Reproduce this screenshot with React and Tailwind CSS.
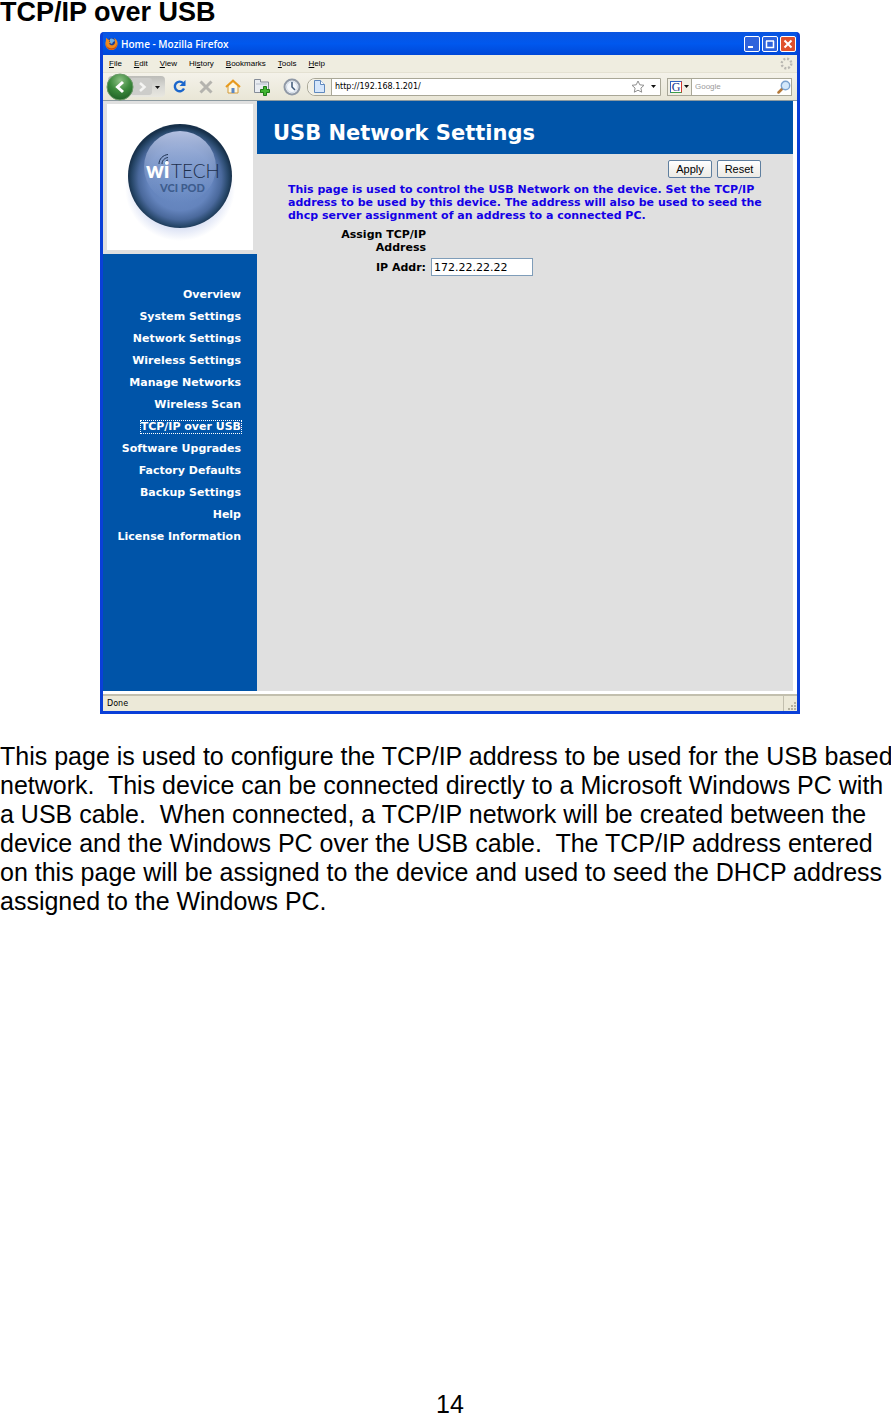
import clsx from 'clsx'

const MENUS = [
  ['', 'F', 'ile'],
  ['', 'E', 'dit'],
  ['', 'V', 'iew'],
  ['Hi', 's', 'tory'],
  ['', 'B', 'ookmarks'],
  ['', 'T', 'ools'],
  ['', 'H', 'elp'],
]

const NAV_ITEMS = [
  'Overview',
  'System Settings',
  'Network Settings',
  'Wireless Settings',
  'Manage Networks',
  'Wireless Scan',
  'TCP/IP over USB',
  'Software Upgrades',
  'Factory Defaults',
  'Backup Settings',
  'Help',
  'License Information',
]

const BODY_LINES = [
  'This page is used to configure the TCP/IP address to be used for the USB based',
  'network.  This device can be connected directly to a Microsoft Windows PC with',
  'a USB cable.  When connected, a TCP/IP network will be created between the',
  'device and the Windows PC over the USB cable.  The TCP/IP address entered',
  'on this page will be assigned to the device and used to seed the DHCP address',
  'assigned to the Windows PC.',
]

function FirefoxIcon() {
  return (
    <svg width="13" height="13" viewBox="0 0 13 13" aria-hidden="true">
      <circle cx="6.5" cy="6" r="5" fill="#1c3f94" />
      <path d="M5 2c2-1 4 0 5 2l-2 1-1 2-2-1z" fill="#6fb1e8" />
      <path
        d="M1 1c1 .3 1.5 1 2 1.6L5 3 4 4.500l2 1-2 1c1 2 4 2.500 5.500.5C10.500 5.500 10 3 9 1c3 1.500 4 4 3.500 6.500C12 11 9.500 13 6.500 13S.8 11 .4 7.500C.2 5 1.300 4 1 1z"
        fill="#f08a1c"
      />
      <path d="M1 6c0 3 2 5 5 5.300S11 10 12 7c0 3-2 5.700-5.500 5.700S1 10 1 6z" fill="#c8480c" />
    </svg>
  )
}

function BackForward() {
  return (
    <svg width="60" height="28" viewBox="0 0 60 28" aria-hidden="true">
      <defs>
        <radialGradient id="back" cx=".5" cy=".25" r=".8">
          <stop offset="0" stopColor="#8cc084" />
          <stop offset=".5" stopColor="#3c8a3c" />
          <stop offset="1" stopColor="#1d5c24" />
        </radialGradient>
        <linearGradient id="fwd" x1="0" y1="0" x2="0" y2="1">
          <stop offset="0" stopColor="#bcbcb8" />
          <stop offset=".5" stopColor="#d8d8d4" />
          <stop offset="1" stopColor="#e8e7e0" />
        </linearGradient>
      </defs>
      <rect x="2" y="3" width="57" height="21" rx="4" fill="url(#fwd)" />
      <rect x="24" y="5" width="22" height="17" rx="3" fill="#cdcdca" />
      <circle cx="14" cy="14" r="13" fill="url(#back)" stroke="#6b9a68" />
      <path d="M17 9l-5.500 5 5.500 5" fill="none" stroke="#fff" strokeWidth="3" />
      <path d="M34 10l4.500 4-4.500 4" fill="none" stroke="#f4f4f2" strokeWidth="2.500" />
      <path d="M49 13h5l-2.500 3z" fill="#111" />
    </svg>
  )
}

function ReloadIcon() {
  return (
    <svg width="15" height="15" viewBox="0 0 15 15" aria-hidden="true">
      <path d="M11 4A4.800 4.800 0 1 0 12 9.500" fill="none" stroke="#1b66cc" strokeWidth="2.400" />
      <path d="M13.500 1v6H7.500z" fill="#1b66cc" />
    </svg>
  )
}

function StopIcon() {
  return (
    <svg width="14" height="14" viewBox="0 0 14 14" aria-hidden="true">
      <path d="M1.500 1.500l11 11M12.500 1.500l-11 11" stroke="#b4b3ae" strokeWidth="3" />
    </svg>
  )
}

function HomeIcon() {
  return (
    <svg width="16" height="15" viewBox="0 0 16 15" aria-hidden="true">
      <path d="M3 7v7h10V7L8 2.500z" fill="#fff7df" stroke="#d29a3b" />
      <path d="M1 8l7-6.500L15 8" fill="none" stroke="#e89a1c" strokeWidth="2" />
      <path d="M6.500 9h3v5h-3z" fill="#5b87c4" />
    </svg>
  )
}

function NewTabIcon() {
  return (
    <svg width="18" height="18" viewBox="0 0 18 18" aria-hidden="true">
      <path d="M1.500 14.500v-13h6v2.500h8v10.500z" fill="#e9ecf1" stroke="#858c98" />
      <path d="M3 6h11" stroke="#b4bcc9" />
      <path d="M10.500 8.500h3v3h3v3h-3v3h-3v-3h-3v-3h3z" fill="#42b531" stroke="#1d7c17" />
    </svg>
  )
}

function HistoryIcon() {
  return (
    <svg width="18" height="18" viewBox="0 0 18 18" aria-hidden="true">
      <circle cx="9" cy="9" r="7.500" fill="#f4f7fb" stroke="#9099a6" strokeWidth="2" />
      <circle cx="9" cy="9" r="5.500" fill="none" stroke="#cdd7e4" />
      <path d="M9 4v5l3 3" fill="none" stroke="#3e5878" strokeWidth="1.500" />
    </svg>
  )
}

function PageIcon() {
  return (
    <svg width="11" height="13" viewBox="0 0 11 13" aria-hidden="true">
      <path d="M.5.5h6l4 4v8H.5z" fill="#d5e6fb" stroke="#5f88bd" />
      <path d="M6.500.5v4h4" fill="#fff" stroke="#5f88bd" />
    </svg>
  )
}

function StarIcon() {
  return (
    <svg width="14" height="13" viewBox="0 0 14 13" aria-hidden="true">
      <path
        d="M7 1l1.800 3.800 4.200.5-3.100 2.800.8 4.100L7 10.200l-3.700 2 .8-4.100L1 5.300l4.200-.5z"
        fill="#fff"
        stroke="#8f8f8f"
      />
    </svg>
  )
}

function DropArrow() {
  return (
    <svg width="5" height="3" viewBox="0 0 5 3" aria-hidden="true">
      <path d="M0 0h5L2.500 3z" fill="#111" />
    </svg>
  )
}

function SearchIcon() {
  return (
    <svg width="14" height="14" viewBox="0 0 14 14" aria-hidden="true">
      <path d="M1.500 12.500L6 8" stroke="#b5793a" strokeWidth="2.500" strokeLinecap="round" />
      <circle cx="8.500" cy="5.500" r="4.200" fill="#d3e8fb" stroke="#7aa2cf" strokeWidth="1.400" />
    </svg>
  )
}

function Throbber() {
  return (
    <svg width="13" height="13" viewBox="0 0 13 13" aria-hidden="true">
      <circle cx="6.500" cy="6.500" r="4.800" fill="none" stroke="#b9b8b2" strokeWidth="2.400" strokeDasharray="2 1.770" />
    </svg>
  )
}

function WitechLogo() {
  return (
    <svg width="146" height="146" viewBox="0 0 146 146" role="img" aria-label="wiTECH VCI POD">
      <defs>
        <radialGradient id="ball" cx=".5" cy=".52" r=".5">
          <stop offset="0" stopColor="#6f91c9" />
          <stop offset=".62" stopColor="#6484bd" />
          <stop offset=".8" stopColor="#4a699c" />
          <stop offset=".93" stopColor="#264668" />
          <stop offset="1" stopColor="#17304a" />
        </radialGradient>
        <linearGradient id="gloss" x1="0" y1="0" x2="0" y2="1">
          <stop offset="0" stopColor="#b4c1e2" />
          <stop offset="1" stopColor="#7f9ccf" stopOpacity="0" />
        </linearGradient>
        <radialGradient id="shade">
          <stop offset=".7" stopColor="#d3dbf2" />
          <stop offset="1" stopColor="#fff" />
        </radialGradient>
      </defs>
      <ellipse cx="73" cy="84" rx="55" ry="53" fill="url(#shade)" />
      <circle cx="73" cy="72" r="52" fill="url(#ball)" />
      <ellipse cx="73" cy="63" rx="36" ry="36" fill="url(#gloss)" />
      <g fill="none" stroke="#1d3150">
        <path d="M52 60c0-5 4-9 9-9.500" />
        <path d="M55 60c0-3.500 2.500-6 6-6.500" />
        <path d="M58 60c0-2 1-3.500 3-4" />
      </g>
      <text x="39" y="74" fontFamily="Lato, sans-serif" fontWeight="900" fontSize="22" fill="#fff">wi</text>
      <text x="64" y="74" fontFamily="Lato, sans-serif" fontWeight="300" fontSize="19" fill="#1d2f4c">TECH</text>
      <text x="53" y="88" fontFamily="Lato, sans-serif" fontWeight="900" fontSize="11" fill="#3d5c8d">VCI POD</text>
    </svg>
  )
}

function WindowButton({ label, close, children }) {
  return (
    <button
      aria-label={label}
      className={clsx(
        'flex h-4 w-4 items-center justify-center rounded-xs border border-white',
        close ? 'bg-[#e0502c]' : 'bg-[#2f63dc]',
      )}
    >
      <svg width="10" height="10" viewBox="0 0 10 10" fill="none" stroke="#fff" strokeWidth="2">
        {children}
      </svg>
    </button>
  )
}

function TitleBar() {
  return (
    <div className="flex h-[23px] items-center gap-[3px] bg-linear-to-b from-[#0a55e0] via-[#0058ee] to-[#0048d8] pr-px pl-[2px]">
      <FirefoxIcon />
      <span className="flex-1 pt-[2px] font-['Open_Sans',sans-serif] text-[10px] font-semibold text-white">
        Home - Mozilla Firefox
      </span>
      <div className="flex gap-[2px] pt-px">
        <WindowButton label="Minimize">
          <path d="M1 8h5" />
        </WindowButton>
        <WindowButton label="Maximize">
          <path d="M1 2h8M1.500 2v6.500h7V2" strokeWidth="1.500" />
        </WindowButton>
        <WindowButton label="Close" close>
          <path d="M1.500 1.500l7 7M8.500 1.500l-7 7" />
        </WindowButton>
      </div>
    </div>
  )
}

function MenuBar() {
  return (
    <div className="flex h-[17px] items-center justify-between bg-[#efede0] pr-1 pl-[6px]">
      <div className="flex gap-3 font-['Liberation_Sans',sans-serif] text-[8px]">
        {MENUS.map(([before, key, after]) => (
          <button key={before + key + after}>
            {before}
            <u>{key}</u>
            {after}
          </button>
        ))}
      </div>
      <Throbber />
    </div>
  )
}

function Toolbar() {
  return (
    <div className="flex h-[29px] items-center border-t border-b border-t-[#e4e1d2] border-b-[#8c9aa0] bg-linear-to-b from-[#f4f2ea] to-[#e9e6d6] pr-[5px] pl-[3px]">
      <button aria-label="Back and forward"><BackForward /></button>
      <div className="ml-[6px] flex items-center gap-3">
        <button aria-label="Reload"><ReloadIcon /></button>
        <button aria-label="Stop"><StopIcon /></button>
        <button aria-label="Home"><HomeIcon /></button>
        <button aria-label="New tab"><NewTabIcon /></button>
        <button aria-label="History"><HistoryIcon /></button>
      </div>
      <div className="ml-[6px] flex h-[18px] min-w-0 flex-1 items-center rounded-l-lg border border-[#a9a797] bg-white">
        <span className="flex h-full w-6 items-center justify-center rounded-l-lg border-r border-[#a9a797] bg-[#f1efe4]">
          <PageIcon />
        </span>
        <input
          aria-label="Location"
          defaultValue="http://192.168.1.201/"
          className="min-w-0 flex-1 pl-[3px] text-[8px] outline-none"
        />
        <button aria-label="Bookmark this page"><StarIcon /></button>
        <button aria-label="Show history" className="mr-1 ml-[6px]"><DropArrow /></button>
      </div>
      <div className="ml-[6px] flex h-[18px] w-[125px] items-center border border-[#a9a797] bg-white">
        <button aria-label="Search engine" className="flex h-full w-6 items-center justify-center gap-[2px] border-r border-[#a9a797] bg-[#f1efe4]">
          <span className="flex h-3 w-3 items-center justify-center border border-t-[#2f62c4] border-r-[#d2392d] border-b-[#3a9c4a] border-l-[#2f62c4] bg-white font-['Liberation_Serif',serif] text-[12px] leading-3 text-[#14328c]">
            G
          </span>
          <DropArrow />
        </button>
        <input
          aria-label="Search"
          placeholder="Google"
          className="min-w-0 flex-1 pl-[3px] font-['Liberation_Sans',sans-serif] text-[8px] outline-none placeholder:text-[#9a9a9a]"
        />
        <button aria-label="Go"><SearchIcon /></button>
      </div>
    </div>
  )
}

function Sidebar() {
  return (
    <aside className="w-[154px] flex-shrink-0 bg-[#0054a8]">
      <div className="bg-[#e0e0e0] px-1 pt-[3px] pb-1">
        <div className="bg-white">
          <WitechLogo />
        </div>
      </div>
      <nav className="mt-[30px] mr-[15px] flex flex-col items-end">
        {NAV_ITEMS.map(item => (
          <a key={item} href="#" className="flex h-[22px] items-center text-[11px] font-bold text-white">
            <span
              className={clsx(
                'border border-dotted leading-3',
                item === 'TCP/IP over USB' ? 'border-white' : 'border-transparent',
              )}
            >
              {item}
            </span>
          </a>
        ))}
      </nav>
    </aside>
  )
}

function FormButton({ children }) {
  return (
    <button className="h-[18px] w-11 rounded-xs border border-[#5f7f9f] bg-linear-to-b from-white to-[#eceae4] font-['Liberation_Sans',sans-serif] text-[11px] leading-4 font-normal">
      {children}
    </button>
  )
}

function SettingsPage() {
  return (
    <main className="min-w-0 flex-1 bg-[#e0e0e0]">
      <header className="flex h-[53px] items-center bg-[#0054a8] pt-3 pl-4">
        <h2 className="text-[21px] font-bold text-white">USB Network Settings</h2>
      </header>
      <form className="pr-8 pl-[31px] text-[11px] leading-[13px] font-bold">
        <div className="flex justify-end gap-[5px] pt-[6px]">
          <FormButton>Apply</FormButton>
          <FormButton>Reset</FormButton>
        </div>
        <p className="mt-[5px] whitespace-nowrap text-[#1400e6]">
          This page is used to control the USB Network on the device. Set the TCP/IP
          <br />
          address to be used by this device. The address will also be used to seed the
          <br />
          dhcp server assignment of an address to a connected PC.
        </p>
        <p className="mt-[6px] w-[138px] pl-10 text-right">Assign TCP/IP Address</p>
        <div className="mt-1 flex items-center gap-[5px]">
          <label htmlFor="ip-addr" className="w-[138px] text-right">IP Addr:</label>
          <input
            id="ip-addr"
            defaultValue="172.22.22.22"
            className="h-[18px] w-[102px] border border-[#7f9db9] bg-white px-[2px] text-[11px] font-normal outline-none"
          />
        </div>
      </form>
    </main>
  )
}

function BrowserWindow() {
  return (
    <section className="w-full max-w-[700px] rounded-t-sm border-3 border-t-0 border-[#0a3fd8] bg-[#0a3fd8] font-['DejaVu_Sans',sans-serif] text-black">
      <TitleBar />
      <MenuBar />
      <Toolbar />
      <div className="flex min-h-[593px] bg-white pr-1 pb-[3px]">
        <Sidebar />
        <SettingsPage />
      </div>
      <footer className="flex h-[17px] items-center justify-between border-t-2 border-[#c2bfae] bg-[#ece9d8] pl-1 text-[8px]">
        Done
        <div className="flex h-full w-[14px] items-end justify-end border-l border-[#c2bfae]">
          <svg width="10" height="10" viewBox="0 0 10 10" fill="#b4b19f" aria-hidden="true">
            <path d="M7 1h2v2H7zM4 4h2v2H4zM7 4h2v2H7zM1 7h2v2H1zM4 7h2v2H4zM7 7h2v2H7z" />
          </svg>
        </div>
      </footer>
    </section>
  )
}

export default function App() {
  return (
    <div className="flex min-h-screen flex-col bg-white font-['Liberation_Sans',sans-serif] text-black">
      <h1 className="mb-2 text-[27px] leading-6 font-bold">TCP/IP over USB</h1>
      <div className="flex justify-center pl-[9px]">
        <BrowserWindow />
      </div>
      <p className="mt-7 text-[25px] leading-[29px] whitespace-pre">
        {BODY_LINES.join('\n')}
      </p>
      <footer className="mt-auto pl-[9px] text-center text-[25px] leading-5">14</footer>
    </div>
  )
}
